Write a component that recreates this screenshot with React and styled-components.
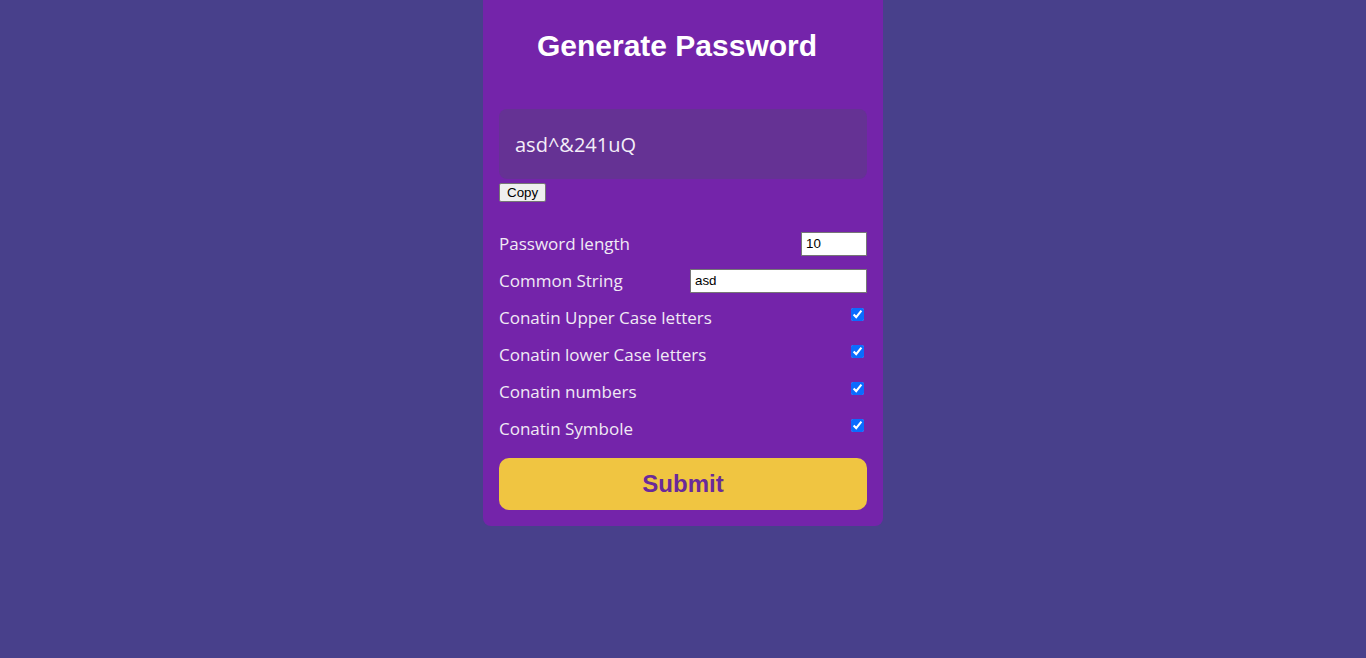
import React, { useState } from 'react'
import styled, { createGlobalStyle } from 'styled-components'

const GlobalStyle = createGlobalStyle`
  html, body {
    margin: 0;
    padding: 0;
    background: #48408b;
    height: 100%;
  }
  body {
    font-family: 'Open Sans', 'Liberation Sans', sans-serif;
  }
`

const Page = styled.div`
  min-height: 658px;
  display: flex;
  justify-content: center;
  align-items: flex-start;
`

const Card = styled.div`
  width: 400px;
  box-sizing: border-box;
  padding: 16px;
  background: #7424aa;
  border-radius: 0 0 8px 8px;
  display: flex;
  flex-direction: column;
`

const Title = styled.h1`
  margin: 13px 12px 46px 0;
  text-align: center;
  font-family: 'Liberation Sans', Arial, sans-serif;
  font-weight: 700;
  font-size: 30px;
  color: #ffffff;
`

const Display = styled.div`
  height: 70px;
  box-sizing: border-box;
  display: flex;
  align-items: center;
  padding: 0 16px;
  background: #653294;
  border-radius: 8px;
  color: #f4eef8;
  font-size: 20px;
  font-weight: 500;
`

const CopyButton = styled.button`
  align-self: flex-start;
  margin-top: 4px;
  height: 19px;
  padding: 0 7px;
  font-family: 'Liberation Sans', Arial, sans-serif;
  font-size: 13.33px;
  color: #000;
  background: #efefef;
  border: 1px solid #767676;
  border-radius: 2px;
`

const Options = styled.div`
  margin-top: 23px;
  display: flex;
  flex-direction: column;
`

const Row = styled.label`
  height: 37px;
  display: flex;
  justify-content: space-between;
  align-items: center;
  color: #f1eaf5;
  font-size: 17px;
  font-weight: 500;
`

const TextInput = styled.input`
  width: ${p => p.$w}px;
  height: 24px;
  box-sizing: border-box;
  padding: 0 4px;
  border: 1px solid #767676;
  background: #fff;
  font-family: 'Liberation Sans', Arial, sans-serif;
  font-size: 13.33px;
  color: #000;
  outline: none;
`

const Check = styled.input`
  width: 13px;
  height: 13px;
  margin: 0 3px 6px 4px;
  accent-color: #0a6cff;
`

const Submit = styled.button`
  margin-top: 11px;
  height: 52px;
  border: none;
  border-radius: 10px;
  background: #f0c541;
  color: #6a2a9a;
  font-family: 'Liberation Sans', Arial, sans-serif;
  font-weight: 700;
  font-size: 24px;
  cursor: pointer;
`

const checks = [
  'Conatin Upper Case letters',
  'Conatin lower Case letters',
  'Conatin numbers',
  'Conatin Symbole',
]

export default function App() {
  const [length, setLength] = useState('10')
  const [common, setCommon] = useState('asd')
  const [flags, setFlags] = useState([true, true, true, true])

  const toggle = (i) => {
    const next = [...flags]
    next[i] = !next[i]
    setFlags(next)
  }

  return (
    <>
      <GlobalStyle />
      <Page>
        <Card>
          <Title>Generate Password</Title>
          <Display>asd^&amp;241uQ</Display>
          <CopyButton>Copy</CopyButton>
          <Options>
            <Row>
              Password length
              <TextInput $w={66} type="text" value={length} onChange={e => setLength(e.target.value)} />
            </Row>
            <Row>
              Common String
              <TextInput $w={177} type="text" value={common} onChange={e => setCommon(e.target.value)} />
            </Row>
            {checks.map((c, i) => (
              <Row key={c}>
                {c}
                <Check type="checkbox" checked={flags[i]} onChange={() => toggle(i)} />
              </Row>
            ))}
          </Options>
          <Submit>Submit</Submit>
        </Card>
      </Page>
    </>
  )
}
